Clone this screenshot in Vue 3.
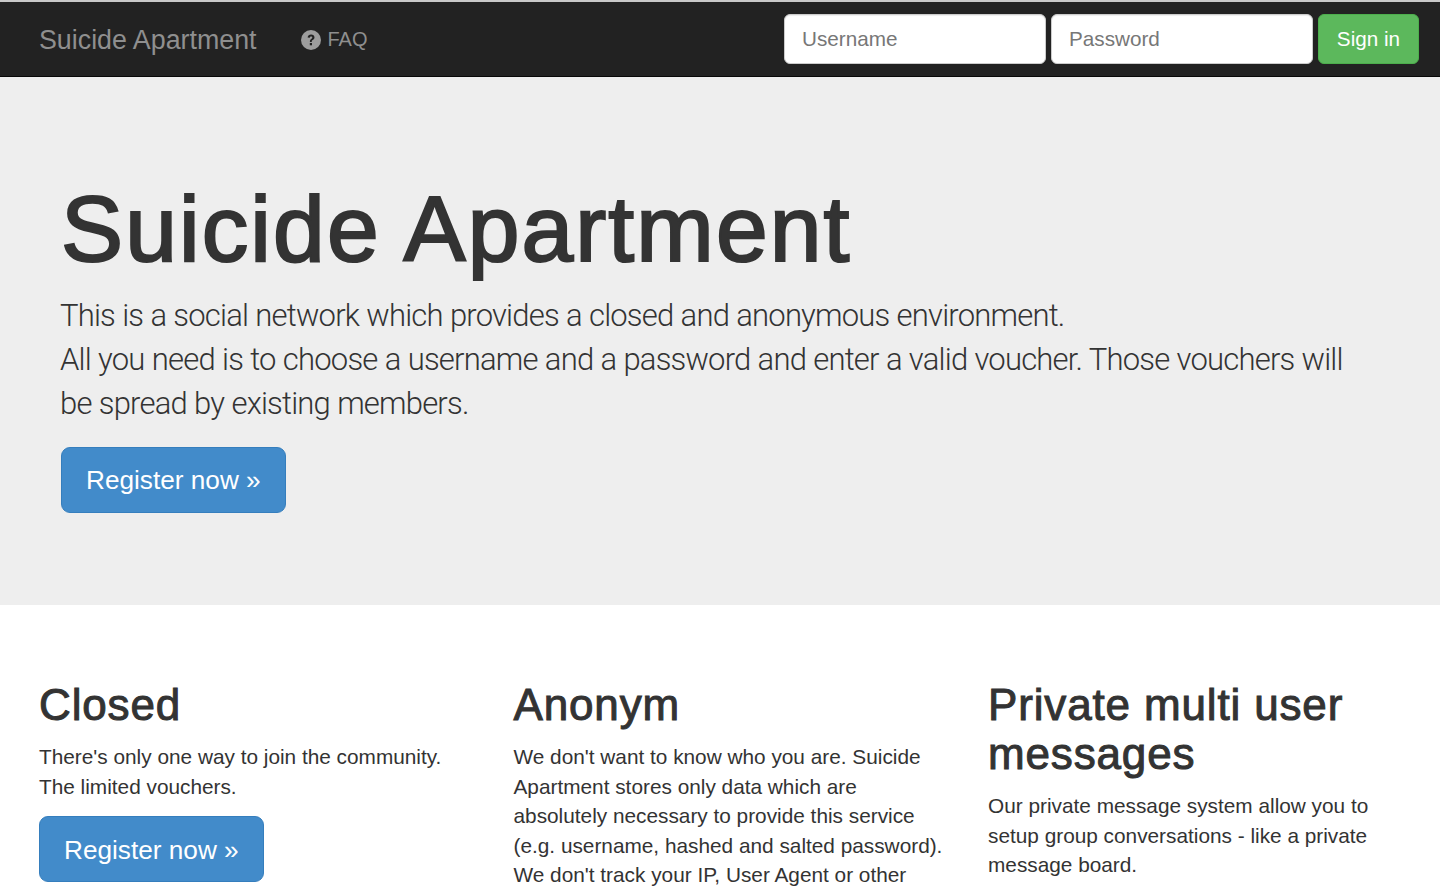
<script setup>
const columns = [
  {
    title: 'Closed',
    lines: ["There's only one way to join the community.", 'The limited vouchers.'],
    button: true
  },
  {
    title: 'Anonym',
    lines: [
      "We don't want to know who you are. Suicide",
      'Apartment stores only data which are',
      'absolutely necessary to provide this service',
      '(e.g. username, hashed and salted password).',
      "We don't track your IP, User Agent or other"
    ]
  },
  {
    title: 'Private multi user messages',
    lines: [
      'Our private message system allow you to',
      'setup group conversations - like a private',
      'message board.'
    ]
  }
]
</script>

<template>
  <div class="page">
    <nav class="navbar">
      <div class="nav-left">
        <a class="brand">Suicide Apartment</a>
        <a class="faq">
          <svg class="faq-icon" viewBox="0 0 20 20" width="20" height="20">
            <circle cx="10" cy="10" r="10" fill="#9d9d9d" />
            <path d="M6.6 7.6c.2-2 1.6-3 3.5-3 2 0 3.4 1.1 3.4 2.8 0 1.300-.8 2-1.700 2.600-.8.5-1 .8-1 1.500v.4H8.900v-.6c0-1.100.4-1.700 1.300-2.300.7-.5 1.100-.8 1.100-1.400 0-.6-.5-1-1.200-1-.8 0-1.200.5-1.300 1.200z" fill="#222" />
            <rect x="8.800" y="13" width="2.200" height="2.300" fill="#222" />
          </svg>
          FAQ
        </a>
      </div>
      <form class="signin" @submit.prevent>
        <input class="field" type="text" placeholder="Username" />
        <input class="field" type="password" placeholder="Password" />
        <button class="btn-success">Sign in</button>
      </form>
    </nav>

    <section class="jumbotron">
      <h1>Suicide Apartment</h1>
      <p class="lead">
        This is a social network which provides a closed and anonymous environment.<br />
        All you need is to choose a username and a password and enter a valid voucher. Those vouchers will be spread by existing members.
      </p>
      <a class="btn-primary">Register now »</a>
    </section>

    <section class="columns">
      <div v-for="col in columns" :key="col.title" class="col">
        <h2>{{ col.title }}</h2>
        <p>
          <template v-for="line in col.lines" :key="line">{{ line }}<br /></template>
        </p>
        <a v-if="col.button" class="btn-primary">Register now »</a>
      </div>
    </section>
  </div>
</template>

<style>
html, body {
  margin: 0;
  background: #fff;
}
</style>

<style scoped>
.page {
  height: 891px;
  overflow: hidden;
  font-family: "Liberation Sans", Arial, sans-serif;
  font-size: 20.8px;
  line-height: 29.5px;
  color: #333;
}

.navbar {
  height: 74px;
  box-sizing: content-box;
  display: flex;
  justify-content: space-between;
  align-items: center;
  padding: 0 21px 0 39px;
  background: #222;
  border-top: 2px solid #c9c9c9;
  border-bottom: 1px solid #080808;
}

.nav-left {
  display: flex;
  align-items: center;
  gap: 45px;
}

.brand {
  font-size: 26.8px;
  color: #8f8f8f;
  padding-top: 3px;
}

.faq {
  display: flex;
  align-items: center;
  gap: 6px;
  padding-top: 2px;
  font-size: 20px;
  color: #8f8f8f;
}

.signin {
  display: flex;
  gap: 5.5px;
}

.field {
  width: 261.5px;
  height: 50px;
  box-sizing: border-box;
  padding: 0 17px;
  border: 1px solid #ccc;
  border-radius: 6px;
  background: #fff;
  box-shadow: inset 0 1px 1px rgba(0, 0, 0, 0.075);
  font-family: inherit;
  font-size: 20.7px;
  color: #555;
}

.field::placeholder {
  color: #777;
  opacity: 1;
}

.btn-success {
  width: 101px;
  height: 50px;
  border: 1px solid #4cae4c;
  border-radius: 6px;
  background: #5cb85c;
  color: #fff;
  font-family: inherit;
  font-size: 20.7px;
}

.jumbotron {
  height: 528px;
  box-sizing: border-box;
  padding: 102px 60px 0;
  background: #eee;
}

h1 {
  margin: 0 0 14px 1px;
  font-size: 93px;
  line-height: 101px;
  font-weight: 400;
  letter-spacing: 2.1px;
  -webkit-text-stroke: 2.2px #333;
  color: #333;
}

.lead {
  max-width: 1305px;
  margin: 0 0 21px;
  font-family: Roboto, "Liberation Sans", sans-serif;
  font-size: 31px;
  line-height: 44px;
  font-weight: 300;
  letter-spacing: -0.8px;
  word-spacing: 0.4px;
  color: #333;
}

.btn-primary {
  display: inline-block;
  padding: 14px 24px;
  border: 1px solid #357ebd;
  border-radius: 9px;
  background: #428bca;
  color: #fff;
  font-size: 26.2px;
  line-height: 36px;
}

.jumbotron .btn-primary {
  margin-left: 1px;
}

.col .btn-primary {
  padding-top: 15px;
  padding-bottom: 13px;
}

.columns {
  display: grid;
  grid-template-columns: repeat(3, 1fr);
  gap: 29.5px;
  padding: 0 7px 0 39px;
}

h2 {
  margin: 75px 0 13px;
  font-size: 44px;
  line-height: 49px;
  font-weight: 400;
  letter-spacing: 0.85px;
  -webkit-text-stroke: 1px #333;
  color: #333;
}

.col p {
  margin: 0 0 15px;
}
</style>
